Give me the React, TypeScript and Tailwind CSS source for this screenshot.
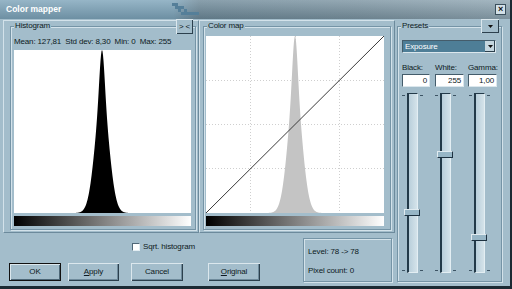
import React from 'react';

// sharp peak: narrow + wide gaussian mix, used for both plots
function peakPath(w: number, h: number, c: number) {
  const pts: string[] = [`M0,${h}`];
  for (let x = 0; x <= w; x += 0.5) {
    const d = x - c;
    const f = 0.3 * Math.exp(-(d * d) / (2 * 2.5 * 2.5)) + 0.7 * Math.exp(-(d * d) / (2 * 7 * 7));
    pts.push(`L${x},${(h - f * h).toFixed(2)}`);
  }
  pts.push(`L${w},${h}Z`);
  return pts.join(' ');
}

// dithered blocks in the caption bar
const dither: [number, number][] = [
  [0, 0], [3, 0], [6, 3], [3, 3], [9, 3], [6, 6], [12, 6], [9, 9], [15, 9], [12, 9], [18, 9], [21, 9], [24, 9],
];

function GroupBox({ label, className, children }: { label?: string; className: string; children?: React.ReactNode }) {
  return (
    <div className={`relative border border-[#7594a6] shadow-[1px_1px_0_#d3e2ea,inset_1px_1px_0_#d3e2ea] ${className}`}>
      {label && (
        <span className="absolute -top-[6px] left-[3px] px-[1px] bg-[#a3bdcb] leading-[10px]">{label}</span>
      )}
      {children}
    </div>
  );
}

function Button({ children, className, isDefault }: { children: React.ReactNode; className: string; isDefault?: boolean }) {
  return (
    <div
      className={`h-[18px] flex items-center justify-center bg-[#a3bdcb] ${
        isDefault
          ? 'border border-[#111] shadow-[inset_1px_1px_0_#dbe7ed,inset_-1px_-1px_0_#4c6676]'
          : 'shadow-[inset_1px_1px_0_#dbe7ed,inset_-1px_-1px_0_#2c404d,inset_-2px_-2px_0_#6e8a9b]'
      } ${className}`}
    >
      {children}
    </div>
  );
}

function Slider({ pos }: { pos: number }) {
  return (
    <div className="relative w-[22px] h-[180px] flex">
      <div className="w-[5px] flex flex-col justify-between pt-[2px] pb-[2px]">
        <div className="w-[3px] h-[1px] bg-[#3d5464]" />
        <div className="w-[3px] h-[1px] bg-[#3d5464]" />
      </div>
      <div className="w-[11px] border-l-2 border-t border-[#233a49] border-r border-r-[#e3eef3] border-b border-b-[#e3eef3] bg-[linear-gradient(to_right,#b9cfdb,#d4e3ea)]" />
      <div className="w-[6px] flex flex-col justify-between pt-[2px] pb-[2px] pl-[2px]">
        <div className="w-[3px] h-[1px] bg-[#3d5464]" />
        <div className="w-[3px] h-[1px] bg-[#3d5464]" />
      </div>
      <div
        className="absolute left-[2px] w-[16px] h-[7px] bg-[#97b6c6] border-t border-l border-[#e0ebf0] border-b border-r border-b-[#1d3140] border-r-[#1d3140]"
        style={{ top: `${pos * 180 - 3}px` }}
      />
    </div>
  );
}

export default function App() {
  const histPath = peakPath(177, 163, 88);
  const mapPath = peakPath(178, 177, 89);

  return (
    <div className="w-[512px] h-[289px] flex flex-col bg-[#a3bdcb] border-r-2 border-b-[3px] border-[#1b2a33] text-[8px] tracking-[-0.15px] text-[#0d1a22] font-['Liberation_Sans',Arial,sans-serif] overflow-hidden">
      {/* title bar */}
      <div className="relative h-[19px] shrink-0 flex items-center pl-[6px] pr-[4px] bg-[linear-gradient(to_bottom,rgba(255,255,255,0.2),rgba(0,0,0,0.12)),linear-gradient(to_right,#7ca3b9_0%,#7ca3b9_34%,#6c8898_39%,#7a93a1_70%,#8ea5b2_100%)]">
        <span className="font-bold text-white text-[8.5px] tracking-normal leading-none">Color mapper</span>
        <svg className="absolute left-[172px] top-[3px]" width="28" height="14">
          <g fill="#557f99">
            {dither.map(([x, y], i) => (
              <rect key={i} x={x} y={y} width="3" height="3" />
            ))}
          </g>
        </svg>
        <div className="ml-auto w-[11px] h-[11px] flex items-center justify-center bg-[#d3e0e7] border border-[#3a4f5c] text-[#111] font-bold text-[9px] leading-none">
          ×
        </div>
      </div>

      <div className="flex-1 flex pl-[3px] pt-[1px]">
        {/* left area */}
        <div className="w-[392px] flex flex-col">
          <div className="h-[213px] flex">
            {/* histogram panel */}
            <div className="relative w-[196px] border-t border-l border-[#d3e2ea] border-b border-r border-b-[#6c8a9c] border-r-[#6c8a9c] pl-[6px] pt-[5px] pr-[2px] pb-[2px] flex">
              <GroupBox label="Histogram" className="flex-1 flex flex-col pl-[3px] pt-[10px]">
                <div className="h-[10px] leading-[10px] whitespace-nowrap">Mean: 127,81 &nbsp;Std dev: 8,30 &nbsp;Min: 0 &nbsp;Max: 255</div>
                <svg className="mt-[3px] bg-white" width="177" height="163">
                  <path d={histPath} fill="#000" />
                </svg>
                <div className="mt-[3px] w-[177px] h-[10px] bg-[linear-gradient(to_right,#000,#fff)]" />
              </GroupBox>
              <div className="absolute left-[172px] -top-[2px] w-[17px] h-[15px] flex items-center justify-center bg-[#a3bdcb] shadow-[inset_1px_1px_0_#dbe7ed,inset_-1px_-1px_0_#2c404d] text-[8px] leading-none">
                &gt; &lt;
              </div>
            </div>
            {/* color map panel */}
            <div className="w-[196px] border-t border-l border-[#d3e2ea] border-b border-r border-b-[#6c8a9c] border-r-[#6c8a9c] pl-[3px] pt-[5px] pr-[3px] pb-[2px] flex">
              <GroupBox label="Color map" className="flex-1 flex flex-col pl-[2px] pt-[9px]">
                <svg className="bg-white" width="178" height="177">
                  <g stroke="#cfcfcf" strokeWidth="1" strokeDasharray="1 2">
                    <line x1="44.5" y1="0" x2="44.5" y2="177" />
                    <line x1="89.5" y1="0" x2="89.5" y2="177" />
                    <line x1="133.5" y1="0" x2="133.5" y2="177" />
                    <line x1="0" y1="44.5" x2="178" y2="44.5" />
                    <line x1="0" y1="88.5" x2="178" y2="88.5" />
                    <line x1="0" y1="132.5" x2="178" y2="132.5" />
                  </g>
                  <path d={mapPath} fill="#c4c4c4" />
                  <line x1="0" y1="177" x2="178" y2="0" stroke="#3a3a3a" strokeWidth="1" />
                </svg>
                <div className="mt-[3px] w-[178px] h-[10px] bg-[linear-gradient(to_right,#000,#fff)]" />
              </GroupBox>
            </div>
          </div>

          {/* bottom controls */}
          <div className="flex-1 flex items-start">
            <div className="w-[297px] flex flex-col">
              <div className="pt-[10px] pl-[129px] flex items-center">
                <div className="w-[8px] h-[8px] bg-white border-t border-l border-[#4f6777] border-b border-r border-b-[#e3eef3] border-r-[#e3eef3]" />
                <span className="ml-[3px] leading-[8px]">Sqrt. histogram</span>
              </div>
              <div className="mt-[12px] pl-[6px] flex">
                <Button isDefault className="w-[52px]">OK</Button>
                <Button className="w-[51px] ml-[7px]">
                  <span><span className="underline">A</span>pply</span>
                </Button>
                <Button className="w-[52px] ml-[12px]">Cancel</Button>
                <Button className="w-[52px] ml-[25px]">
                  <span><span className="underline">O</span>riginal</span>
                </Button>
              </div>
            </div>
            <GroupBox className="ml-[3px] mt-[5px] w-[89px] h-[44px] pl-[4px] pt-[8px] flex flex-col">
              <div className="leading-[10px]">Level: 78 -&gt; 78</div>
              <div className="mt-[9px] leading-[10px]">Pixel count: 0</div>
            </GroupBox>
          </div>
        </div>

        {/* presets */}
        <div className="pl-[2px] pt-[6px]">
          <GroupBox label="Presets" className="w-[105px] h-[256px] flex flex-col pl-[4px]">
            <div className="absolute left-[83px] -top-[8px] w-[18px] h-[14px] flex items-center justify-center bg-[#a3bdcb] shadow-[inset_1px_1px_0_#dbe7ed,inset_-1px_-1px_0_#2c404d]">
              <svg width="5" height="3"><path d="M0,0 L5,0 L2.5,3 Z" fill="#111" /></svg>
            </div>
            <div className="mt-[13px] w-[94px] h-[13px] flex border-t border-l border-[#445c6b] border-b border-r border-b-[#dbe7ed] border-r-[#dbe7ed]">
              <div className="flex-1 bg-[#4e7e97] text-white pl-[2px] leading-[11px]">Exposure</div>
              <div className="w-[10px] flex items-center justify-center bg-[#c4d6df] shadow-[inset_-1px_-1px_0_#2c404d]">
                <svg width="5" height="3"><path d="M0,0 L5,0 L2.5,3 Z" fill="#111" /></svg>
              </div>
            </div>
            <div className="mt-[10px] h-[10px] leading-[10px] flex">
              <span className="w-[33px]">Black:</span>
              <span className="w-[33px]">White:</span>
              <span>Gamma:</span>
            </div>
            <div className="mt-[1px] flex">
              <div className="w-[28px] h-[13px] bg-white text-right pr-[2px] leading-[11px] border-t border-l border-[#445c6b] border-b border-r border-b-[#dbe7ed] border-r-[#dbe7ed]">0</div>
              <div className="ml-[5px] w-[29px] h-[13px] bg-white text-right pr-[2px] leading-[11px] border-t border-l border-[#445c6b] border-b border-r border-b-[#dbe7ed] border-r-[#dbe7ed]">255</div>
              <div className="ml-[4px] w-[29px] h-[13px] bg-white text-right pr-[2px] leading-[11px] border-t border-l border-[#445c6b] border-b border-r border-b-[#dbe7ed] border-r-[#dbe7ed]">1,00</div>
            </div>
            <div className="mt-[6px] flex">
              <Slider pos={0.66} />
              <div className="ml-[11px]"><Slider pos={0.34} /></div>
              <div className="ml-[12px]"><Slider pos={0.8} /></div>
            </div>
          </GroupBox>
        </div>
      </div>
    </div>
  );
}
